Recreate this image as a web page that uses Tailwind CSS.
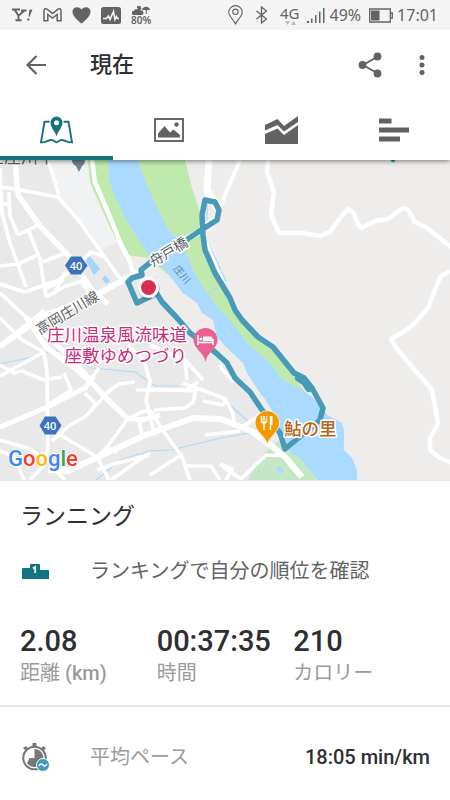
<!DOCTYPE html>
<html lang="ja">
<head>
<meta charset="utf-8">
<meta name="viewport" content="width=device-width, initial-scale=1">
<title>現在</title>
<script src="https://cdn.jsdelivr.net/npm/@tailwindcss/browser@4"></script>
</head>
<body class="min-h-screen bg-white font-['Roboto','Noto_Sans_CJK_JP',sans-serif] text-[#2e2f31]">

<!-- Status bar -->
<div class="relative z-20 flex h-[30px] items-center justify-between bg-[#f4f4f4] pr-3 pl-3 font-['Noto_Sans',sans-serif] text-[#626464]">
  <div class="flex items-center gap-[10px]">
    <svg class="h-4 w-[21px]" viewBox="0 0 21 16" role="img" aria-label="Yahoo">
      <path d="M0 2.500h8M9 3.500h5.500M2.500 2.500l4 6.200M12.500 3.500l-6 5.200V13M3.500 13.200h6" fill="none" stroke="currentColor" stroke-width="1.900"/>
      <path d="M17.500 2.500l3 .3-3 7h-1zM15.200 11.500h2.200v2h-2.200z" fill="currentColor"/>
    </svg>
    <svg class="h-4 w-[19px]" viewBox="0 0 19 16" fill="none" stroke="currentColor" stroke-width="1.500" role="img" aria-label="Gmail">
      <path d="M1 13.800V3.500C1 1.500 3 1.300 4 2.200L9.500 6.500 15 2.200C16 1.300 18 1.500 18 3.500V13.800H14.200V7.500L9.500 11 4.800 7.500V13.800Z"/>
    </svg>
    <svg class="h-[18px] w-[19px]" viewBox="0 0 19 18" fill="currentColor" role="img" aria-label="Health"><path d="M9.500 17.500C5 14 .5 10 .5 5.500C.5 1 6.500-.5 9.500 3.500C12.500-.5 18.500 1 18.500 5.500C18.500 10 14 14 9.500 17.500Z"/></svg>
    <svg class="h-[17px] w-5" viewBox="0 0 20 17" role="img" aria-label="Activity"><rect width="20" height="17" rx="2.500" fill="currentColor"/><path d="M2 11.500h3.500l2-2.500 1.500 3.500 3.500-8 1.500 8 1.500-3 1 2H18" fill="none" stroke="#f4f4f4" stroke-width="1.600"/></svg>
    <div class="flex flex-col items-center">
      <svg class="h-[9px] w-[18px]" viewBox="0 0 18 9" fill="currentColor" aria-hidden="true"><path d="M1.500 9a2 2 0 0 1 .5-4 2 2 0 0 1 2.500-1.500A2.500 2.500 0 0 1 9 4.500 2.200 2.200 0 0 1 9.500 9ZM5 2a2 2 0 0 1 4-.5l.5 1.500H8ZM10 4.500C10 2 12 .8 14 .8s4 1.200 4 3.700l-1.500-.8-1.700.8V8h-1V4.500l-1.600-.8Z"/></svg>
      <span class="text-[10px] leading-[10px] font-semibold">80%</span>
    </div>
  </div>
  <div class="flex items-center text-base">
    <svg class="mr-3 h-5 w-[15px]" viewBox="0 0 15 20" fill="none" stroke="currentColor" stroke-width="1.100" role="img" aria-label="Location"><path d="M7.500 19.300C6.500 15 .8 12 .8 7.300a6.700 6.700 0 0 1 13.400 0C14.200 12 8.500 15 7.500 19.300Z"/><circle cx="7.500" cy="6.800" r="2.700"/></svg>
    <svg class="mr-3 h-[18px] w-[13px]" viewBox="0 0 13 18" fill="none" stroke="currentColor" stroke-width="1.300" role="img" aria-label="Bluetooth"><path d="M1.500 5l10 8L6.500 17V1l5 4-10 8"/></svg>
    <div class="mr-2 flex flex-col items-center">
      <span class="text-[15px] leading-4">4G</span>
      <svg class="h-1 w-3" viewBox="0 0 12 4" fill="#bdbdbd" aria-hidden="true"><path d="M1 0h5L3.500 4ZM7 4h5L9.500 0Z"/></svg>
    </div>
    <svg class="mr-1 h-4 w-[18px]" viewBox="0 0 18 16" fill="currentColor" role="img" aria-label="Signal"><path d="M0 14h2v2H0zM4 11.500h1.500V16H4zM8 8h1.500v8H8zM12 4.500h1.500V16H12zM16 1h1.500v15H16z"/></svg>
    <span>49%</span>
    <svg class="mx-2 mr-1 h-[15px] w-6" viewBox="0 0 24 15" role="img" aria-label="Battery"><path d="M.7 1h20.600v13H.7zM22 5h1.300v5H22" fill="none" stroke="currentColor" stroke-width="1.300"/><path d="M2 2.500h8.500v10H2z" fill="currentColor"/></svg>
    <span>17:01</span>
  </div>
</div>

<!-- App bar -->
<header class="relative z-10 bg-white shadow-[0_1px_5px_rgba(0,0,0,0.5)]">
  <div class="flex h-[70px] items-center pr-[14px] pl-5 text-[#616262]">
    <button type="button" aria-label="戻る" class="flex size-8 items-center justify-center">
      <svg class="h-5 w-5" viewBox="0 0 20 20" fill="none" stroke="currentColor" stroke-width="2.200"><path d="M20 10H2M10.500 1L1.500 10l9 9"/></svg>
    </button>
    <h1 class="ml-[38px] flex-1 text-[22px] leading-8 font-medium text-[#2e2f31]">現在</h1>
    <button type="button" aria-label="共有" class="flex size-8 items-center justify-center">
      <svg class="h-[26px] w-6" viewBox="0 0 24 26" fill="currentColor"><path d="M20 4.500L5 13l15 8.500" fill="none" stroke="currentColor" stroke-width="2"/><circle cx="4.500" cy="13" r="3.900"/><circle cx="19.500" cy="4.500" r="3.900"/><circle cx="19.500" cy="21.500" r="3.900"/></svg>
    </button>
    <button type="button" aria-label="メニュー" class="ml-[22px] flex h-8 w-7 items-center justify-center">
      <svg class="h-5 w-[6px]" viewBox="0 0 6 20" fill="currentColor"><circle cx="3" cy="2.500" r="2.500"/><circle cx="3" cy="10" r="2.500"/><circle cx="3" cy="17.500" r="2.500"/></svg>
    </button>
  </div>
  <nav class="grid h-[60px] grid-cols-4 text-[#616262]">
    <button type="button" aria-label="地図" aria-current="page" class="flex items-center justify-center border-b-4 border-[#16737b] pt-1 text-[#16737b]">
      <svg class="h-7 w-[33px]" viewBox="0 0 33 28"><path d="M9.500 5.800H4.500L1 26.300c5 .5 7-2.500 10.500-2.300 3 .1 3.500 2.200 5 2.200s2-2.100 5-2.200c3.500-.2 5.500 2.800 10.500 2.300L28.500 5.800h-5" fill="none" stroke="currentColor" stroke-width="1.900"/><path fill-rule="evenodd" d="M16.500 20.500C15.500 15.500 10.500 12 10.500 6.500a6 6 0 0 1 12 0C22.500 12 17.500 15.500 16.500 20.500ZM16.500 9.200a2.500 2.500 0 1 0 0-5 2.500 2.500 0 0 0 0 5Z" fill="currentColor"/></svg>
    </button>
    <button type="button" aria-label="写真" class="flex items-center justify-center">
      <svg class="h-6 w-[30px]" viewBox="0 0 30 24"><rect x="1" y="1" width="28" height="22" fill="none" stroke="currentColor" stroke-width="1.900"/><path d="M4 19.500v-4L10.500 8l5.500 6.500 3.500-3L26 17v2.500Z" fill="currentColor"/><circle cx="22.500" cy="6.500" r="2.200" fill="currentColor"/></svg>
    </button>
    <button type="button" aria-label="グラフ" class="flex items-center justify-center">
      <svg class="h-7 w-[33px]" viewBox="0 0 33 28" fill="currentColor"><path d="M0 9L12.500 3l6.500 7L33 0v6L19 15.500 12.500 9 0 14.500ZM0 18l12.500-5.500 6.500 6.500L33 9v19H0Z"/></svg>
    </button>
    <button type="button" aria-label="ラップ" class="flex items-center justify-center">
      <svg class="h-6 w-[30px]" viewBox="0 0 30 24" fill="currentColor"><path d="M0 .5h12.500v5H0zM0 9.500h30v5H0zM0 18.500h21v5H0z"/></svg>
    </button>
  </nav>
</header>

<main>
  <!-- Route map -->
  <svg class="block aspect-[45/32] w-full" viewBox="0 160 450 320" role="img" aria-label="ルートの地図">
    <rect y="160" width="450" height="320" fill="#eeedeb"/>
    <path d="M0 160H90L115 240 132 268 160 305 178 320 215 352 262 410 285 480H0Z" fill="#e9e9e9"/>
    <path d="M48 160H88L90 182 103 212 118 242 99 250 80 221 59 195Z" fill="#f1f2f4"/>
    <!-- river and banks -->
    <path d="M88 160H185L192 188 202 218 207 252 233 312 258 337 275 350 300 385 312 400 290 400 220 318 148 258 128 255 115 238 103 212 90 182Z" fill="#bfe9ad"/>
    <path d="M108 160H137L150 192 167 228 183 245 193 270 208 295 222 312 230 320 247 343 267 360 283 380 300 389 312 397 323 408 327 415 342 423 344 430V450L352 458 357 470V480H278L284 445 273 412 267 402 258 390 247 373 243 363 227 348 217 337 213 320 202 313 197 303 183 293 165 270 150 258 137 237 125 218 113 192 109 178Z" fill="#aadaff"/>
    <path d="M248 480L262 455 278 441 288 449 300 458 318 480Z" fill="#c2e8c4"/>
    <path d="M276 468l5-2 3 6-5 2zM290 452l6-2 3 4-6 1z" fill="#aadaff"/>
    <path d="M84 257l5-2 11 14-6 6zM102 279l3-4 5 6-4 3z" fill="#a4d6fb"/>
    <path d="M207 205v22M208 243l18 38M208 293l10-5" fill="none" stroke="#aedbf8" stroke-width="1.500"/>
    <g fill="none" stroke="#addaf8" stroke-width="1.200" stroke-linejoin="round">
      <path d="M0 364l28-6 28-8 36 18 43 4 20 14h24"/>
      <path d="M96 480l25-20 28-9 22-1 50-12 28-5"/><path d="M230 405l20 18"/>
    </g>
    <!-- minor roads -->
    <g fill="none" stroke="#fff" stroke-width="3.600" stroke-linejoin="round">
      <path d="M92 160L95 182 110 217 120 242 130 262 133 274" stroke-width="4.500"/>
      <path d="M0 187l15 2 43 8 21 24 20 28 22 31"/>
      <path d="M48 160l11 35M0 168l2 45 8 30 16 44"/>
      <path d="M0 204h9M18 235l20-10M0 266l18-2 22-10M9 192l1 24 8 19M0 284l25 8 34-12 24-20 8-8 12 4"/>
      <path d="M28 229l12 30 6 38M43 262l20-8M46 288l18-8M65 273l-12 22M46 297l20-11 20-6"/>
      <path d="M0 293l26 24 15 11"/>
      <path d="M0 318l22 22 22 12M0 345l30-23 14-12M44 352L0 376M0 365l14 8 8-2 22 9 18-3"/>
      <path d="M44 352l3 20 1 77-4 14"/>
      <path d="M64 373l7 17-23 15M85 393l10 10-3 8"/>
      <path d="M88 383l11-15M52 441l18-16 15-8 24-26 10-7 16-2"/>
      <path d="M57 433l40 24 10-10 20-27 12-7 11-3M97 457l12 23M107 447l10 6M139 420l3 16"/>
      <path d="M0 440l30 9 16 12M0 451l14 5 10 24M45 464l-15 16M55 470l10 10"/>
      <path d="M97 470l20-7 33-8M111 480l28-20 11-7"/>
      <path d="M128 345l16 15 6 22-4 18 8 32"/>
      <path d="M136 390l50 0 12-8M150 389l46 2-3 11-8 6-31 2"/>
      <path d="M183 383l43 16-3 6-20-4M226 400l7 14 1 7M150 345l35 15 18 20M185 360l2 20"/>
      <path d="M221 355v13l13 14"/>
      <path d="M150 410l14 22 18 25 8 23M150 475l20-13 13-8M186 466l25 0 9 14M220 464l12 5-6 11M242 480l-22-16"/>
      <path d="M240 429l22-16M240 480l26-25 20 1M205 435l35-4"/>
    </g>
    <!-- east hill roads -->
    <g fill="none" stroke="#fff" stroke-width="4.500" stroke-linejoin="round">
      <path d="M208 160l-1 35 12 20M240 160l-14 33-9 23-17 12" stroke-width="4"/>
      <path d="M209 160l-2 30 12 18" stroke-width="7"/>
      <path d="M268 160l-1 12 7 20-3 23 8 18 22 0 19 3 10-4 13-18 6-5 5 4 4 12 4 3 13-7 13-2 15-11 5 2 7 12 12 6 24 19"/>
      <path d="M450 271l-10 6-12 31-15 17-8 6-14 8 6 10 35 41 6 34-8 14v12l10 8 12 5"/>
      <path d="M207 243l16 38" stroke-width="2.500"/>
    </g>
    <!-- main roads -->
    <g fill="none" stroke="#fff" stroke-width="6" stroke-linejoin="round">
      <path d="M15 160l3 35 22 31 27 28 26 37 15 13M26 317l20 30 30 22 18 16 16 17 16 15" stroke-width="5.500"/>
      <path d="M60 310l40-17 27-15 20-11 27-22 40-20" stroke-width="6"/>
      <path d="M0 347l46-33 14-4" stroke-width="5"/>
      <path d="M0 427l45-19 40-20 9-12" stroke-width="5"/>
      <path d="M48 470l20 1 75-35 50-18 28 1 30 12 22 16 12 10 17 20"/>
      <path d="M125 418l17 2 18-5M97 303l-14-20M31 322l19 16 42 43" stroke-width="5"/>
    </g>
    <!-- route -->
    <g fill="none" stroke="#489ab9" stroke-linejoin="round" stroke-linecap="round">
      <path stroke-width="5.500" d="M149 297L137 303 128 282 132 278 142 275 141 270 151 262 183 242 203 229 217 220 219 210 215 202 205 200 202 215 203 235 205 250 215 273 230 298 235 310 242 320 258 337 273 347 294 373 304 378 312 388 323 408 320 420 285 449 280 433 262 410 250 392 235 378 227 363 215 352 190 333 178 319 162 302 157 294"/>
      <path stroke-width="8" d="M299 378l6 4 4 6"/>
    </g>
    <!-- road shields -->
    <g font-family="'Open Sans','Noto Sans',sans-serif" font-size="11" font-weight="600" text-anchor="middle" fill="#fff">
      <path d="M65 265.500L71 256.500H81L87.500 265.500 81 274.500H71Z" fill="#3a72bd"/><text x="76" y="270">40</text>
      <path d="M39.500 425.500L45 416.500H55.500L61.500 425.500 55.500 434.500H45Z" fill="#3a72bd"/><text x="50" y="430">40</text>
    </g>
    <!-- place names -->
    <g font-family="'Noto Sans CJK JP',sans-serif" paint-order="stroke" stroke="#fff" stroke-linejoin="round" fill="#575d63">
      <text x="-13" y="163" font-size="17" stroke-width="2">立庄川中</text>
      <text transform="translate(40 335) rotate(-31)" font-size="14" stroke-width="2">高岡庄川線</text>
      <text transform="translate(153 267) rotate(-31)" font-size="14" stroke-width="3">舟戸橋</text>
      <text transform="translate(173 269) rotate(50)" font-size="10" stroke="none" fill="#5588a8">庄川</text>
      <g fill="#c92c78" font-size="17.500" stroke-width="3" text-anchor="end"><text x="187" y="341">庄川温泉風流味道</text><text x="187" y="362">座敷ゆめつづり</text></g>
      <text x="284" y="435" font-size="17.500" font-weight="500" stroke-width="3" fill="#b86414">鮎の里</text>
    </g>
    <!-- pins -->
    <path d="M72 160h13q0 4-3 6l-3 6-3-6q-4-2-4-6" fill="#71818d"/>
    <circle cx="393" cy="160" r="2.500" fill="#2d8590" stroke="#b7e2e6"/>
    <path d="M205.500 362C204 352 193.500 349 193.500 340a12 12 0 0 1 24 0C217.500 349 207 352 205.500 362Z" fill="#ea6192"/>
    <path d="M198 335v10M198 342.500h15.500M213 345v-6" stroke="#fff" stroke-width="1.500" fill="none"/><path d="M203 341v-4.500h7q3 0 3 4.500z" fill="#fff"/><circle cx="201" cy="339" r="1.500" fill="#fff"/>
    <path d="M267.500 445C266 436 255 432 255 423a12.300 12.300 0 0 1 24.600 0C279.600 432 269 436 267.500 445Z" fill="#f29900" stroke="#fff" stroke-width=".7"/>
    <path d="M261.500 416v5q0 2 2.500 2t2.500-2v-5M264 416v14M270.500 430v-14" stroke="#fff" stroke-width="1.400" fill="none"/><path d="M270 425v-6q0-3 2.500-3v9z" fill="#fff"/>
    <circle cx="149" cy="289" r="11" fill="#000" opacity=".15"/><circle cx="148.500" cy="287.500" r="10.500" fill="#fff"/><circle cx="148.500" cy="287.500" r="7.500" fill="#d5304f"/>
    <text x="8" y="466" font-family="Roboto,sans-serif" font-size="22" font-weight="500" paint-order="stroke" stroke="#fff" stroke-width="1.500"><tspan fill="#4285f4">G</tspan><tspan fill="#ea4335">o</tspan><tspan fill="#fbbc05">o</tspan><tspan fill="#4285f4">g</tspan><tspan fill="#34a853">l</tspan><tspan fill="#ea4335">e</tspan></text>
  </svg>

  <section class="border-t border-[#e6e6e6] px-5 pt-5">
    <h2 class="text-[23px] leading-8">ランニング</h2>
    <a href="#ranking" class="mt-[22px] flex items-center text-xl leading-8 text-[#626363]">
      <svg class="mr-[41px] ml-[2px] h-[15px] w-[27px] shrink-0" viewBox="0 0 27 15" aria-hidden="true"><path d="M0 5q0-1 1-1H8V1q0-1 1-1h8q1 0 1 1V6h8q1 0 1 1v8H0Z" fill="#10747c"/><path d="M10.800 4.200L13.200 3V9" fill="none" stroke="#fff" stroke-width="1.800"/></svg>
      <span>ランキングで自分の順位を確認</span>
    </a>
    <dl class="mt-[38px] grid grid-cols-3 pb-4">
      <div class="flex flex-col-reverse"><dt class="text-xl leading-8 text-[#9b9b9b]">距離 <span class="font-medium">(km)</span></dt><dd class="text-[29px] leading-8 font-medium whitespace-nowrap">2.08</dd></div>
      <div class="flex flex-col-reverse"><dt class="text-xl leading-8 text-[#9b9b9b]">時間</dt><dd class="text-[29px] leading-8 font-medium whitespace-nowrap">00:37:35</dd></div>
      <div class="flex flex-col-reverse"><dt class="text-xl leading-8 text-[#9b9b9b]">カロリー</dt><dd class="text-[29px] leading-8 font-medium whitespace-nowrap">210</dd></div>
    </dl>
  </section>

  <section class="flex h-[94px] items-center border-t-2 border-[#e6e6e6] px-5 pt-2">
    <svg class="mr-[40px] ml-[2px] h-[29px] w-7 shrink-0" viewBox="0 0 28 29" aria-hidden="true">
      <path d="M10.500 0h4v4h-4zM1 5l3-2 1.500 2-2.500 2zM21 3l3 2-2 2.500-2.500-2.500z" fill="#777"/>
      <circle cx="12.500" cy="15" r="11.300" fill="#fff" stroke="#777" stroke-width="2"/>
      <path d="M12.500 15V6a9 9 0 0 1 8 13zM12.500 6a9 9 0 0 1 6 15.500L13 24A9 9 0 0 1 5 20l2.500-5h5z" fill="#777"/>
      <circle cx="21" cy="22" r="6.500" fill="#459abb" stroke="#fff"/><path d="M17 23q2-3.500 4-1t4-1" fill="none" stroke="#fff" stroke-width="1.500"/>
    </svg>
    <span class="flex-1 text-xl leading-8 text-[#9b9b9b]">平均ペース</span>
    <span class="text-xl leading-8 font-medium">18:05 min/km</span>
  </section>
</main>
</body>
</html>
